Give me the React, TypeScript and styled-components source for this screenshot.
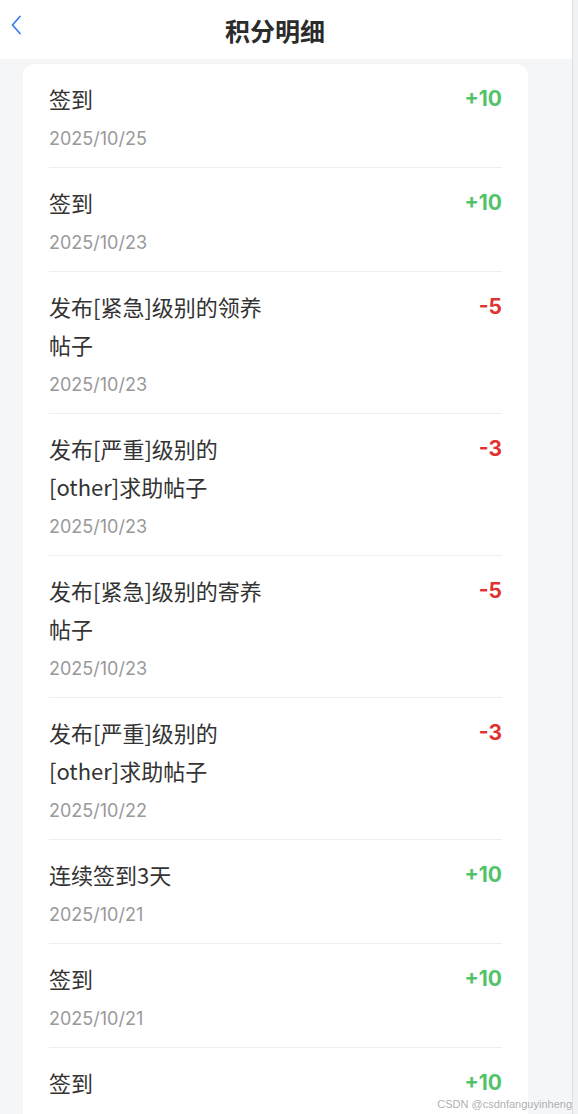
import React from 'react';
import styled, { createGlobalStyle } from 'styled-components';

const GlobalStyle = createGlobalStyle`
  html, body {
    margin: 0;
    padding: 0;
    background: #f5f6f8;
    font-family: "Noto Sans CJK SC", "Noto Sans", sans-serif;
    overflow: hidden;
  }
`;

const Page = styled.div`
  display: flex;
  width: 578px;
  height: 1114px;
  overflow: hidden;
  position: relative;
`;

const Main = styled.div`
  width: 572px;
  background: #f5f6f8;
`;

const ScrollTrack = styled.div`
  width: 5px;
  border-left: 1px solid #dcdde3;
  background: #f1f2f6;
`;

const Header = styled.header`
  height: 59px;
  background: #ffffff;
  display: flex;
  align-items: center;
  justify-content: center;
  position: relative;
  padding-right: 22px;
`;

const BackButton = styled.button`
  position: absolute;
  left: 4px;
  top: 13px;
  width: 24px;
  height: 24px;
  padding: 0;
  border: none;
  background: none;
  display: flex;
  align-items: center;
  justify-content: center;
`;

const Title = styled.h1`
  margin: 0;
  font-size: 25px;
  font-weight: 700;
  color: #2b2b2b;
`;

const Card = styled.div`
  margin: 5px 44px 0 23px;
  background: #ffffff;
  border-radius: 12px;
  padding: 0 26px;
`;

const Row = styled.div`
  display: flex;
  justify-content: space-between;
  align-items: flex-start;
  padding: 15px 0 14px;
  border-bottom: 1px solid #eeeeee;
`;

const Info = styled.div`
  max-width: 226px;
`;

const Reason = styled.div`
  font-size: 22px;
  line-height: 38px;
  color: #333333;
`;

const DateText = styled.div`
  margin-top: 8px;
  font-size: 18px;
  line-height: 28px;
  color: #999999;
  font-family: Inter, "Noto Sans", sans-serif;
`;

const Amount = styled.div<{ $positive: boolean }>`
  font-family: Inter, "Noto Sans", sans-serif;
  font-size: 21px;
  line-height: 38px;
  margin-top: 1px;
  font-weight: 700;
  color: ${(p) => (p.$positive ? '#52c26b' : '#e0332f')};
`;

const Watermark = styled.div`
  position: absolute;
  right: 6px;
  bottom: 4px;
  font-family: "Liberation Sans", sans-serif;
  font-size: 11px;
  color: rgba(160, 160, 160, 0.85);
`;

const records = [
  { reason: '签到', date: '2025/10/25', points: 10 },
  { reason: '签到', date: '2025/10/23', points: 10 },
  { reason: '发布[紧急]级别的领养帖子', date: '2025/10/23', points: -5 },
  { reason: '发布[严重]级别的[other]求助帖子', date: '2025/10/23', points: -3 },
  { reason: '发布[紧急]级别的寄养帖子', date: '2025/10/23', points: -5 },
  { reason: '发布[严重]级别的[other]求助帖子', date: '2025/10/22', points: -3 },
  { reason: '连续签到3天', date: '2025/10/21', points: 10 },
  { reason: '签到', date: '2025/10/21', points: 10 },
  { reason: '签到', date: '2025/10/20', points: 10 },
];

const App: React.FC = () => {
  return (
    <>
      <GlobalStyle />
      <Page>
        <Main>
          <Header>
            <BackButton aria-label="返回">
              <svg width="12" height="22" viewBox="0 0 12 22" fill="none">
                <path d="M10 2.5 L2.5 11 L10 19.5" stroke="#3d7ff0" strokeWidth="1.8" strokeLinecap="round" strokeLinejoin="round" />
              </svg>
            </BackButton>
            <Title>积分明细</Title>
          </Header>
          <Card>
            {records.map((r, i) => (
              <Row key={i}>
                <Info>
                  <Reason>{r.reason}</Reason>
                  <DateText>{r.date}</DateText>
                </Info>
                <Amount $positive={r.points > 0}>
                  {r.points > 0 ? `+${r.points}` : r.points}
                </Amount>
              </Row>
            ))}
          </Card>
        </Main>
        <ScrollTrack />
        <Watermark>CSDN @csdnfanguyinheng</Watermark>
      </Page>
    </>
  );
};

export default App;
